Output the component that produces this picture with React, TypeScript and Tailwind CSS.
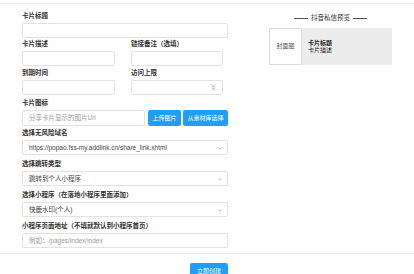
import React from "react";

const font = { fontFamily: '"Liberation Sans", "Noto Sans CJK SC", sans-serif' };

function Label({ children }: { children: React.ReactNode }) {
  return (
    <div className="h-[8px] mb-[3px] text-[6.5px] leading-[8px] font-bold text-[#333] whitespace-nowrap">
      {children}
    </div>
  );
}

function Input({ placeholder, className = "", spinner = false }: { placeholder?: string; className?: string; spinner?: boolean }) {
  return (
    <div
      className={`relative h-[15px] border border-[#e2e2e2] rounded-[2px] bg-white flex items-center pl-[6px] text-[6.5px] text-[#9a9a9a] ${className}`}
    >
      {placeholder}
      {spinner && (
        <svg className="absolute right-[6px] top-[3px]" width="5" height="7" viewBox="0 0 5 7">
          <rect width="5" height="7" rx="1" fill="#eeeeee" />
          <path d="M1.2 3 L2.5 1.6 L3.8 3 Z M1.2 4 L2.5 5.4 L3.8 4 Z" fill="#b5b5b5" />
        </svg>
      )}
    </div>
  );
}

function Select({ value }: { value: string }) {
  return (
    <div className="relative h-[15px] border border-[#e2e2e2] rounded-[2px] bg-white flex items-center pl-[6px] text-[6.5px] text-[#444]">
      {value}
      <svg className="absolute right-[5px] top-[6px]" width="4" height="3" viewBox="0 0 4 3">
        <path d="M0.4 0.5 L2 2.2 L3.6 0.5" stroke="#999" strokeWidth="0.7" fill="none" />
      </svg>
    </div>
  );
}

export default function App() {
  return (
    <div className="w-[414px] h-[274px] overflow-hidden bg-white" style={font}>
      <div className="h-[4px] border-b border-[#ececec]" />

      <div className="flex">
        {/* form */}
        <div className="ml-[22px] w-[206px] pt-[8px]">
          <Label>卡片标题</Label>
          <Input />

          <div className="flex mt-[2px]">
            <div className="w-[93px]">
              <Label>卡片描述</Label>
              <Input />
            </div>
            <div className="w-[92px] ml-[16px]">
              <Label>链接备注（选填）</Label>
              <Input />
            </div>
          </div>

          <div className="flex mt-[3px]">
            <div className="w-[93px]">
              <Label>到期时间</Label>
              <Input />
            </div>
            <div className="w-[92px] ml-[16px]">
              <Label>访问上限</Label>
              <Input spinner />
            </div>
          </div>

          <div className="mt-[4px]">
            <Label>卡片图标</Label>
            <div className="flex h-[16px]">
              <Input placeholder="分享卡片显示的图片Url" className="w-[123px] h-[16px]" />
              <button className="ml-[3px] w-[33px] h-[16px] rounded-[2px] bg-[#1e9fff] text-white text-[6px]">上传图片</button>
              <button className="ml-[2px] w-[45px] h-[16px] rounded-[2px] bg-[#1e9fff] text-white text-[6px]">从素材库选择</button>
            </div>
          </div>

          <div className="mt-[3px]">
            <Label>选择无风险域名</Label>
            <Select value="https://popao.fss-my.addlink.cn/share_link.xhtml" />
          </div>

          <div className="mt-[5px]">
            <Label>选择跳转类型</Label>
            <Select value="跳转到个人小程序" />
          </div>

          <div className="mt-[5px]">
            <Label>选择小程序（在落地小程序里面添加）</Label>
            <Select value="快鹿水印(个人)" />
          </div>

          <div className="mt-[5px]">
            <Label>小程序页面地址（不填就默认到小程序首页）</Label>
            <Input placeholder="例如：/pages/index/index" />
          </div>
        </div>

        {/* preview */}
        <div className="ml-[41px] w-[123px] pt-[10px]">
          <div className="h-[8px] flex items-center justify-center text-[6.5px] text-[#333]">
            <span className="w-[14px] h-px bg-[#555]" />
            <span className="mx-[3px]">抖音私信预览</span>
            <span className="w-[14px] h-px bg-[#555]" />
          </div>
          <div className="mt-[6px] h-[37px] flex bg-[#ececec]">
            <div className="w-[33px] h-full bg-white border border-[#dcdcdc] flex items-center justify-center text-[6px] text-[#555]">
              封面图
            </div>
            <div className="pl-[6px] flex flex-col justify-center text-[6px] leading-[7px] text-[#222]">
              <div className="font-bold">卡片标题</div>
              <div>卡片描述</div>
            </div>
          </div>
        </div>
      </div>

      <div className="mt-[5px] border-t border-[#ececec]" />
      <div className="flex pt-[9px]">
        <button className="ml-[190px] w-[38px] h-[16px] rounded-[2px] bg-[#1e9fff] text-white text-[6px]">立即创建</button>
      </div>
    </div>
  );
}
